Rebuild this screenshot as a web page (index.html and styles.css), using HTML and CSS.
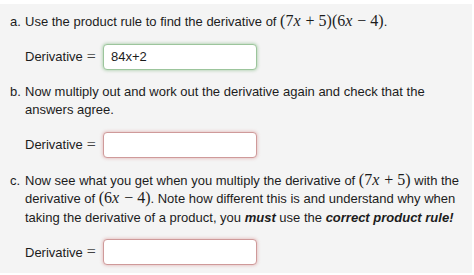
FILE: index.html
```html
<!DOCTYPE html>
<html>
<head>
<meta charset="utf-8">
<link rel="stylesheet" href="styles.css">
</head>
<body>
<div class="panel">
  <div class="part part-a">
    <div class="q"><span class="lbl">a.</span><span class="txt">Use the product rule to find the derivative of <span class="m">(7<i>x</i><span class="op">+</span>5)(6<i>x</i><span class="op">−</span>4)</span>.</span></div>
    <div class="ans"><span class="dl">Derivative<span class="eq">=</span></span><span class="inp ok">84x+2</span></div>
  </div>
  <div class="part part-b">
    <div class="q"><span class="lbl">b.</span><span class="txt">Now multiply out and work out the derivative again and check that the answers agree.</span></div>
    <div class="ans"><span class="dl">Derivative<span class="eq">=</span></span><span class="inp bad"></span></div>
  </div>
  <div class="part part-c">
    <div class="q"><span class="lbl">c.</span><span class="txt">Now see what you get when you multiply the derivative of <span class="m">(7<i>x</i><span class="op">+</span>5)</span> with the derivative of <span class="m">(6<i>x</i><span class="op">−</span>4)</span>. Note how different this is and understand why when taking the derivative of a product, you <b><i>must</i></b> use the <b><i>correct product rule!</i></b></span></div>
    <div class="ans"><span class="dl">Derivative<span class="eq">=</span></span><span class="inp bad"></span></div>
  </div>
</div>
</body>
</html>
```
FILE: styles.css
```css
html, body {
  margin: 0;
  padding: 0;
  background: #ffffff;
}
body {
  padding-top: 4px;
  font-family: "Liberation Sans", Arial, sans-serif;
  font-size: 13px;
  color: #1c1c1c;
}
.panel {
  width: 472px;
  height: 269px;
  box-sizing: border-box;
  background: #f4f4f4;
  padding: 9px 0 0 10px;
}
.q {
  display: flex;
  line-height: 18.5px;
}
.lbl {
  flex: 0 0 15px;
}
.txt {
  flex: 1;
  padding-right: 8px;
}
.m {
  font-family: "Liberation Serif", "Times New Roman", serif;
  font-size: 16px;
  line-height: 1;
}
.m i {
  font-style: italic;
  padding-right: 1px;
}
.op {
  margin: 0 4px;
}
.ans {
  display: flex;
  align-items: center;
  padding-left: 15px;
  margin-top: 12px;
}
.dl {
  width: 78px;
  display: flex;
  align-items: center;
}
.eq {
  font-family: "Liberation Serif", "Times New Roman", serif;
  font-size: 16px;
  line-height: 1;
  color: #444;
  margin-left: 4px;
}
.inp {
  box-sizing: border-box;
  width: 154px;
  height: 26px;
  background: #fff;
  border-radius: 4px;
  padding: 0 7px;
  line-height: 24px;
  font-size: 13px;
}
.ok {
  border: 1px solid #9cc59c;
  box-shadow: 0 0 3px 1px rgba(120, 180, 120, 0.45);
}
.bad {
  border: 1px solid #cf9a9a;
  box-shadow: 0 0 3px 1px rgba(210, 120, 120, 0.35);
}
.part-b {
  margin-top: 13px;
}
.part-c {
  margin-top: 14px;
}
```
